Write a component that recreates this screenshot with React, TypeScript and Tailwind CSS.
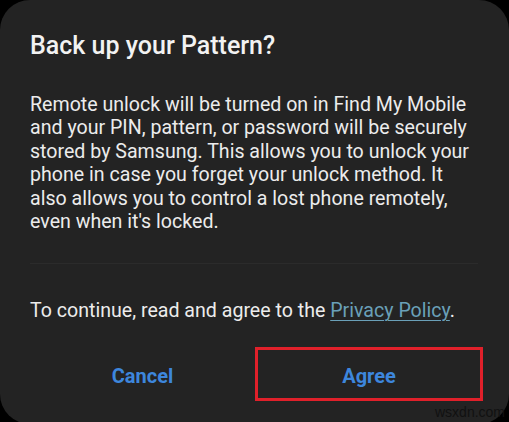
import React from "react";

export default function App() {
  return (
    <div className="w-[509px] h-[422px] bg-black overflow-hidden" style={{ fontFamily: "Roboto, 'Noto Sans', sans-serif" }}>
      <div className="relative w-[509px] h-[424px] bg-[#232323] rounded-[30px] flex flex-col">
        <div className="pl-[30px] pr-[30px] pt-[29px]">
          <h1 className="text-[25px] leading-[34px] font-medium text-[#f2f2f2]">Back up your Pattern?</h1>
          <p className="mt-[30px] text-[19.6px] leading-[23.4px] text-[#ececec]">
            Remote unlock will be turned on in Find My Mobile and your PIN, pattern, or password will be securely stored by Samsung. This allows you to unlock your phone in case you forget your unlock method. It also allows you to control a lost phone remotely, even when it's locked.
          </p>
          <div className="mt-[30px] h-px bg-[#2b2b2b] mr-[1px]" />
          <p className="mt-[35px] text-[19.6px] leading-[23px] text-[#ececec]">
            To continue, read and agree to the{" "}
            <span className="text-[#6aa0b8] underline underline-offset-[3px] decoration-[1px]">Privacy Policy</span>.
          </p>
        </div>
        <div className="flex mt-[25px] px-[30px] h-[54px]">
          <button className="flex-1 flex items-center justify-center pt-[3px] text-[20px] font-bold text-[#3d86dc]">Cancel</button>
          <button className="w-[228px] flex items-center justify-center pt-[3px] text-[20px] font-bold text-[#3d86dc] border-[3px] border-[#e0202a] -mr-[4px]">Agree</button>
        </div>
        <span className="absolute left-[435px] top-[404px] text-[14px] leading-[16px] text-[#111111]" style={{ fontFamily: "'Liberation Sans', sans-serif" }}>wsxdn.com</span>
      </div>
    </div>
  );
}
